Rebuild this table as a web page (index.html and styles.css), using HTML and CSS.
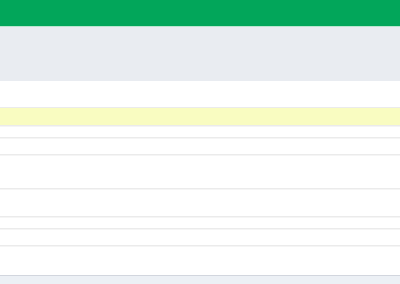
FILE: index.html
```html
<!DOCTYPE html>
<html lang="en">
<head>
  <meta charset="UTF-8">
  <meta name="viewport" content="width=device-width, initial-scale=1.0">
  <title>Dashboard</title>
  <link rel="stylesheet" href="styles.css">
</head>
<body>
  <div class="page">
    <div class="topbar"></div>
    <div class="content-header"></div>

    <div class="box">
      <div class="row row-head"></div>
      <div class="row row-highlight"></div>
      <div class="row row-sm"></div>
      <div class="row row-md"></div>
      <div class="row row-lg"></div>
      <div class="row row-tall"></div>
      <div class="row row-sm"></div>
      <div class="row row-md"></div>
      <div class="row row-foot"></div>
    </div>

    <div class="page-footer"></div>
  </div>
</body>
</html>
```

FILE: styles.css
```css
body {
  margin: 0;
  font-family: 'Liberation Sans', Arial, sans-serif;
  background-color: #ecf0f5;
  color: #333;
}
.page {
  display: flex;
  flex-direction: column;
  min-height: 284px;
}
.topbar {
  height: 26px;
  background: #02a65a;
  border-bottom: 1px solid #b9e6cf;
}
.content-header {
  height: 54px;
  background: #e9ecf1;
}
.box {
  background: #fff;
  border-bottom: 1px solid #d2d6de;
}
.row {
  border-top: 1px solid #ebebeb;
  box-shadow: inset 0 1px 0 #f5f5f5;
}
.row-head {
  height: 26px;
  border-top: none;
  box-shadow: none;
}
.row-highlight {
  height: 17px;
  background: #f9fcc1;
  box-shadow: none;
}
.row-sm {
  height: 11px;
}
.row-md {
  height: 16px;
}
.row-lg {
  height: 33px;
}
.row-tall {
  height: 27px;
}
.row-foot {
  height: 29px;
}
.page-footer {
  flex: 1;
  background: #ecf0f5;
}
```
